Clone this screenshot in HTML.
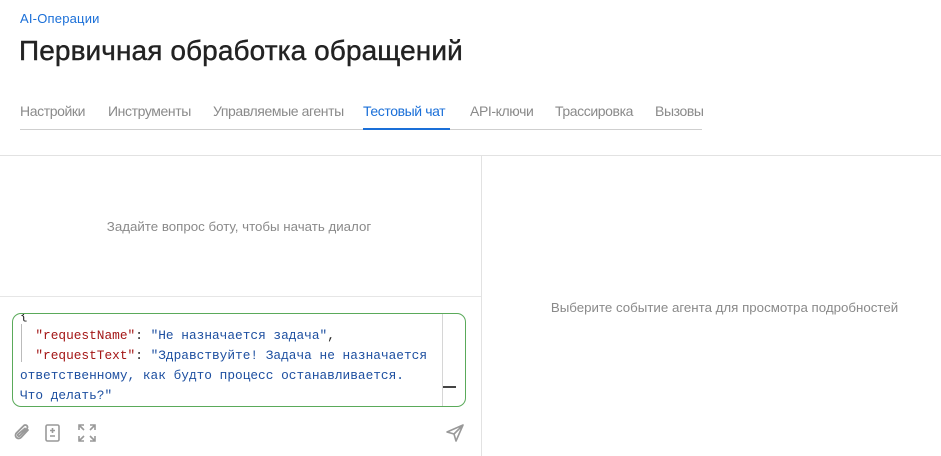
<!DOCTYPE html>
<html><head><meta charset="utf-8"><style>
*{margin:0;padding:0;box-sizing:border-box}
body{width:941px;height:456px;overflow:hidden;background:#fff;font-family:"Liberation Sans",sans-serif;position:relative}
.a{position:absolute}
.crumb{left:20px;top:11px;font-size:13px;color:#1a6fd8;letter-spacing:0.2px}
h1{position:absolute;left:19px;top:35px;font-size:28px;font-weight:400;color:#222;letter-spacing:0.1px;-webkit-text-stroke:0.4px #222}
.tab{position:absolute;top:103px;font-size:14px;color:#8a8a8a;letter-spacing:-0.4px;white-space:nowrap}
.code{position:absolute;left:12px;top:313px;width:454px;height:94px;border:1px solid #5aaa5a;border-radius:9px;overflow:hidden;background:#fff}
.code pre{position:absolute;left:7px;top:-8px;font-family:"Liberation Mono",monospace;font-size:12.8px;line-height:20px;color:#1d4fa0}
.k{color:#a31515}.p{color:#222}
</style></head><body>
<div class="a crumb">AI-Операции</div>
<h1>Первичная обработка обращений</h1>
<div class="tab" style="left:20px">Настройки</div>
<div class="tab" style="left:108px">Инструменты</div>
<div class="tab" style="left:213px">Управляемые агенты</div>
<div class="tab" style="left:363px;color:#1a6fd8">Тестовый чат</div>
<div class="tab" style="left:470px">API-ключи</div>
<div class="tab" style="left:555px">Трассировка</div>
<div class="tab" style="left:655px">Вызовы</div>
<div class="a" style="left:20px;top:129px;width:682px;height:1px;background:#cfcfcf"></div>
<div class="a" style="left:363px;top:128px;width:87px;height:2px;background:#1a6fd8"></div>
<div class="a" style="left:0;top:155px;width:941px;height:1px;background:#e2e2e2"></div>
<div class="a" style="left:481px;top:156px;width:1px;height:300px;background:#e2e2e2"></div>
<div class="a" style="left:0;top:296px;width:481px;height:1px;background:#e6e6e6"></div>
<div class="a" style="left:0;top:219px;width:478px;text-align:center;font-size:13.3px;color:#8a8a8a">Задайте вопрос боту, чтобы начать диалог</div>
<div class="a" style="left:495px;top:300px;width:459px;text-align:center;font-size:13.3px;color:#8a8a8a">Выберите событие агента для просмотра подробностей</div>
<div class="code">
<pre><span class="p">{</span>
<span class="k">  "requestName"</span><span class="p">: </span>"Не назначается задача"<span class="p">,</span>
<span class="k">  "requestText"</span><span class="p">: </span>"Здравствуйте! Задача не назначается
ответственному, как будто процесс останавливается.
Что делать?"</pre>
<div class="a" style="left:8px;top:10px;width:1px;height:38px;background:#bbb"></div>
<div class="a" style="left:429px;top:0;width:1px;height:94px;background:#d6d6d6"></div>
<div class="a" style="left:430px;top:72px;width:13px;height:2px;background:#444"></div>
</div>
<svg class="a" style="left:12px;top:423px" width="20" height="20" viewBox="0 0 20 20" fill="none" stroke="#999" stroke-width="1.8" stroke-linecap="round"><path d="M16 7l-7 7.5a3.2 3.2 0 0 1-4.6-4.5l7.5-7.5a2.2 2.2 0 0 1 3.1 3.1l-7.3 7.3a1.1 1.1 0 0 1-1.6-1.6L13 5.5"/></svg>
<svg class="a" style="left:44px;top:423px" width="18" height="20" viewBox="0 0 18 20" fill="none" stroke="#999" stroke-width="1.6"><rect x="2" y="2" width="13" height="16" rx="1.5"/><path d="M8.5 5v5M6 7.5h5M6 13h5"/></svg>
<svg class="a" style="left:77px;top:423px" width="20" height="20" viewBox="0 0 20 20" fill="none" stroke="#999" stroke-width="1.6"><path d="M2 7V2h5M13 2h5v5M18 13v5h-5M7 18H2v-5M2 2l5 5M18 2l-5 5M18 18l-5-5M2 18l5-5"/></svg>
<svg class="a" style="left:445px;top:423px" width="20" height="20" viewBox="0 0 20 20" fill="none" stroke="#999" stroke-width="1.6" stroke-linejoin="round"><path d="M2 9L18 2l-7 16-2-7z M9 11l9-9"/></svg>
</body></html>
